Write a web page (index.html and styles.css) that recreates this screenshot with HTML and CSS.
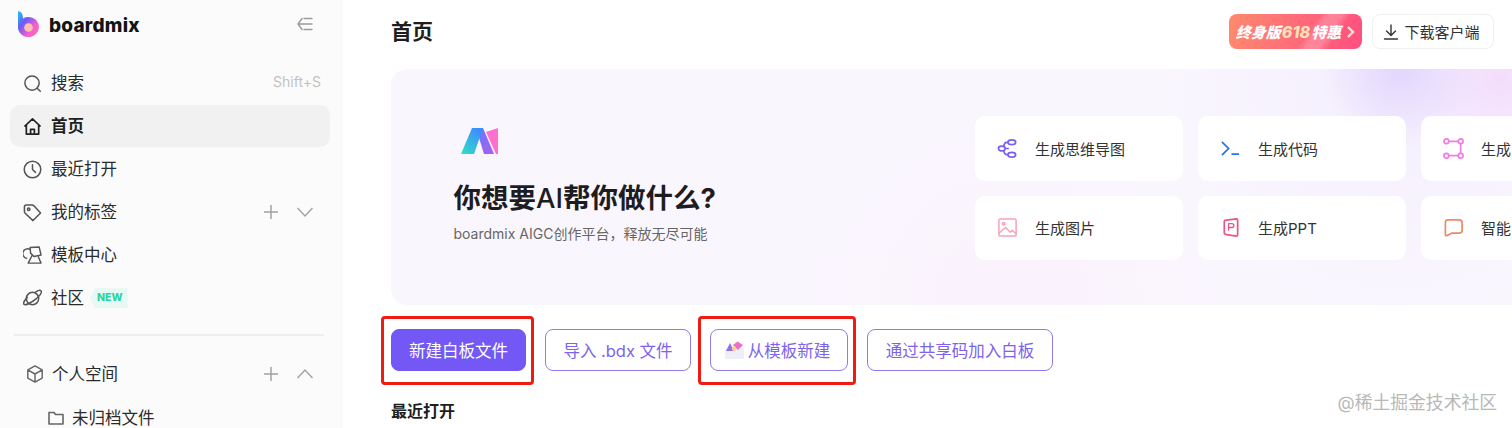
FILE: index.html
```html
<!DOCTYPE html>
<html lang="zh-CN">
<head>
<meta charset="utf-8">
<title>boardmix 首页</title>
<link rel="stylesheet" href="styles.css">
</head>
<body>
<div class="app">
  <aside class="sidebar">
    <div class="brand">
      <svg class="brand-logo" width="21" height="27" viewBox="0 0 21 27">
        <defs>
          <linearGradient id="lgB" x1="0" y1="0" x2="1" y2="1">
            <stop offset="0" stop-color="#1fc8f2"/><stop offset=".35" stop-color="#6a5cf5"/><stop offset=".68" stop-color="#f45fd0"/><stop offset="1" stop-color="#ff6fa8"/>
          </linearGradient>
        </defs>
        <path fill="url(#lgB)" d="M0 0 Q5 1 5 7 V7.500 A10.500 10 0 1 1 0 17 Z"/>
        <circle cx="10.500" cy="16.500" r="4.300" fill="#ffc0b0"/>
      </svg>
      <span class="brand-name">boardmix</span>
      <svg class="collapse" width="16" height="14" viewBox="0 0 16 14" fill="none" stroke="#9b9b9b" stroke-width="1.400" stroke-linecap="round" stroke-linejoin="round"><path d="M5 1.500 1 7l4 5.500M1 7h14M7 1.500h8M7 12.500h8"/></svg>
    </div>
    <nav class="nav">
      <a class="nav-item">
        <svg class="ic" viewBox="0 0 20 20" fill="none" stroke="#555" stroke-width="1.600" stroke-linecap="round"><circle cx="9.500" cy="9.500" r="7.500"/><path d="m15.200 15.200 3 3"/></svg>
        <span class="nav-label">搜索</span><span class="hint">Shift+S</span>
      </a>
      <a class="nav-item active">
        <svg class="ic" viewBox="0 0 20 20" fill="none" stroke="#222" stroke-width="1.800" stroke-linejoin="round"><path d="M1.500 10 10 2l8.500 8M3.500 8.500V18h13V8.500M8 18v-5h4v5"/></svg>
        <span class="nav-label">首页</span>
      </a>
      <a class="nav-item">
        <svg class="ic" viewBox="0 0 20 20" fill="none" stroke="#555" stroke-width="1.600" stroke-linecap="round" stroke-linejoin="round"><circle cx="10" cy="10" r="8.700"/><path d="M10 5v5l3.200 3"/></svg>
        <span class="nav-label">最近打开</span>
      </a>
      <a class="nav-item">
        <svg class="ic" viewBox="0 0 20 20" fill="none" stroke="#555" stroke-width="1.600" stroke-linejoin="round"><path d="M1.500 4q0-2 2-2H9.500q1 0 2 1l7 7.500-8 8-8.500-8q-.500-.500-.500-1.500Z"/><circle cx="6" cy="6.500" r="1.300"/></svg>
        <span class="nav-label">我的标签</span>
        <span class="tools">
          <svg width="16" height="16" viewBox="0 0 16 16" fill="none" stroke="#a3a3a3" stroke-width="1.500"><path d="M8 1v14M1 8h14"/></svg>
          <svg width="16" height="16" viewBox="0 0 16 16" fill="none" stroke="#a3a3a3" stroke-width="1.500"><path d="m.5 4 7.500 8 7.500-8"/></svg>
        </span>
      </a>
      <a class="nav-item">
        <svg class="ic" viewBox="0 0 20 20" fill="none" stroke="#555" stroke-width="1.500" stroke-linejoin="round"><path d="M7.500 3.800A5 5 0 1 0 4.500 13M7.500 1.500l9.500-.500 2 8.500-7.500 1.500-3.500-3.500ZM9.500 10l-4 8h13.500l-3-7"/></svg>
        <span class="nav-label">模板中心</span>
      </a>
      <a class="nav-item">
        <svg class="ic" viewBox="0 0 20 20" fill="none" stroke="#555" stroke-width="1.600" stroke-linecap="round"><circle cx="10" cy="10" r="6.500"/><path d="M4.500 9C1.500 12 0 15 1 16c1.500 1.500 7-1 12-5s7-7.500 6-9c-.7-1-3-.5-5.500 1"/></svg>
        <span class="nav-label">社区</span><span class="badge">NEW</span>
      </a>
    </nav>
    <hr class="divider">
    <div class="space-head">
      <svg class="ic-space" viewBox="0 0 20 20" fill="none" stroke="#666" stroke-width="1.600" stroke-linejoin="round"><path d="M10 1 18 5.500v9L10 19l-8-4.500v-9ZM2 5.500l8 4.500 8-4.500M10 10v9"/></svg>
      <span class="nav-label">个人空间</span>
      <span class="tools">
        <svg width="16" height="16" viewBox="0 0 16 16" fill="none" stroke="#a3a3a3" stroke-width="1.500"><path d="M8 1v14M1 8h14"/></svg>
        <svg width="16" height="16" viewBox="0 0 16 16" fill="none" stroke="#a3a3a3" stroke-width="1.500"><path d="m.5 12 7.500-8 7.500 8"/></svg>
      </span>
    </div>
    <div class="folder">
      <svg width="16" height="14" viewBox="0 0 16 14" fill="none" stroke="#666" stroke-width="1.600" stroke-linejoin="round"><path d="M1 1.500h5l1.500 2H15V13H1Z"/></svg>
      <span class="nav-label">未归档文件</span>
    </div>
  </aside>

  <main class="main">
    <header class="topbar">
      <h1 class="title">首页</h1>
      <div class="top-actions">
        <a class="promo">终身版<em>618</em>特惠<svg width="9" height="12" viewBox="0 0 9 12" fill="none" stroke="#ffe3d0" stroke-width="2.400"><path d="m2 1 5 5-5 5"/></svg></a>
        <a class="download">
          <svg width="16" height="16" viewBox="0 0 16 16" fill="none" stroke="#333" stroke-width="1.400" stroke-linecap="round" stroke-linejoin="round"><path d="M8 1v10M3.500 7 8 11.500 12.500 7M1.500 15h13"/></svg>
          下载客户端
        </a>
      </div>
    </header>

    <section class="hero">
      <div class="hero-text">
        <svg class="ai-logo" width="37" height="28" viewBox="0 0 37 28">
          <defs>
            <linearGradient id="lgA" x1="0" y1="1" x2=".7" y2="0"><stop offset="0" stop-color="#2fe0c4"/><stop offset="1" stop-color="#3d8dff"/></linearGradient>
            <linearGradient id="lgM" x1="0" y1="0" x2="1" y2="1"><stop offset="0" stop-color="#5f7bff"/><stop offset="1" stop-color="#b05cf0"/></linearGradient>
          </defs>
          <path fill="#ff6fd0" d="M25 5 37 1v26h-2Z"/>
          <path fill="url(#lgM)" d="M15 1h7l11 26H23Z"/>
          <path fill="url(#lgA)" d="M11 1h11L13 27H0Z"/>
        </svg>
        <h2 class="hero-title">你想要<span class="hero-ai">AI</span>帮你做什么?</h2>
        <p class="hero-sub">boardmix AIGC创作平台，释放无尽可能</p>
      </div>
      <div class="hero-cards">
        <a class="card">
          <svg class="card-ic" viewBox="0 0 22 22" fill="none" stroke="#7b5ff0" stroke-width="1.800"><ellipse cx="15.500" cy="4.500" rx="4" ry="2.500"/><ellipse cx="15.500" cy="17.500" rx="4" ry="2.500"/><ellipse cx="5" cy="11" rx="3.500" ry="2.500"/><path d="M11.500 4.500H10Q8 4.500 7 8.500M11.500 17.500H10Q8 17.500 7 13.500M8.500 11h4"/></svg>
          生成思维导图
        </a>
        <a class="card">
          <svg class="card-ic" viewBox="0 0 22 22" fill="none" stroke="#2a6ff0" stroke-width="1.800"><path d="m2 4 7 7-7 7M12 17h8"/></svg>
          生成代码
        </a>
        <a class="card">
          <svg class="card-ic" viewBox="0 0 22 22" fill="none" stroke="#f47be6" stroke-width="1.800"><circle cx="3.500" cy="3.500" r="2.500"/><circle cx="18.500" cy="3.500" r="2.500"/><circle cx="3.500" cy="18.500" r="2.500"/><circle cx="18.500" cy="18.500" r="2.500"/><path d="M6 3.500h10M6 18.500h10M18.500 6v10"/></svg>
          生成
        </a>
        <a class="card">
          <svg class="card-ic" viewBox="0 0 22 22" fill="none" stroke="#f8a3b8" stroke-width="1.600" stroke-linejoin="round"><rect x="2" y="2" width="18" height="18" rx="1.500"/><circle cx="7" cy="7" r="1.300"/><path d="m2 17 7-6 5 5 2-2 4 3.500"/></svg>
          生成图片
        </a>
        <a class="card">
          <svg class="card-ic" viewBox="0 0 22 22" fill="none" stroke="#e8558a" stroke-width="1.800" stroke-linejoin="round"><path d="M5 3.500 17 2q1.500 0 1.500 1.500v15q0 1.500-1.500 1.500L7 18.500q-2.500-.5-2.500-2V5Z"/><path d="M9 14.500V7h3.500q2 0 2 2t-2 2H9" stroke-width="1.400"/></svg>
          生成PPT
        </a>
        <a class="card">
          <svg class="card-ic" viewBox="0 0 22 22" fill="none" stroke="#ee8a63" stroke-width="1.800" stroke-linejoin="round"><path d="M5 3h12q3 0 3 3v8q0 3-3 3H9l-5 2.500q-1.500.5-1.500-1V6q0-3 2.500-3Z"/></svg>
          智能
        </a>
      </div>
    </section>

    <div class="actions">
      <a class="btn btn-primary">新建白板文件</a>
      <a class="btn btn-import">导入 .bdx 文件</a>
      <a class="btn btn-template">
        <svg width="21" height="20" viewBox="0 0 21 20"><rect x="1" y="8" width="19" height="11" rx="1.500" fill="#efedf5"/><path d="M2 11 6 3l4 8Z" fill="#8d74ee"/><path d="m9 5 4.500-3.500L19 5l-5 5Z" fill="#ee6fc4"/><circle cx="10" cy="8.500" r="2.200" fill="#ffd27a"/></svg>
        从模板新建
      </a>
      <a class="btn btn-code">通过共享码加入白板</a>
      <span class="mark mark-a"></span>
      <span class="mark mark-b"></span>
    </div>

    <h3 class="recent">最近打开</h3>
  </main>
  <span class="watermark">@稀土掘金技术社区</span>
</div>
</body>
</html>
```

FILE: styles.css
```css
* { box-sizing: border-box; }
html, body { margin: 0; height: 100%; overflow: hidden; background: #fff; }
body { font-family: Inter, "Noto Sans CJK SC", sans-serif; color: #2b2b2b; }
a { color: inherit; text-decoration: none; }
.app { display: flex; width: 1512px; height: 428px; overflow: hidden; position: relative; }

.sidebar { width: 343px; flex: none; background: #fbfbfb; padding: 0 13px 0 10px; }
.brand { display: flex; align-items: center; height: 62px; padding: 0 8px 14px 8px; }
.brand-logo { flex: none; }
.brand-name { font-size: 19px; font-weight: 800; color: #141414; margin-left: 10px; letter-spacing: .2px; flex: 1; line-height: 1; margin-top: 2px; }
.collapse { margin-right: 9px; }

.nav { display: flex; flex-direction: column; gap: 1px; }
.nav-item { display: flex; align-items: center; height: 42px; padding: 0 10px 0 13px; border-radius: 10px; font-size: 16.500px; }
.nav-item.active { background: #f1f1f1; font-weight: 700; color: #1f1f1f; }
.ic { width: 19px; height: 19px; flex: none; margin-right: 9px; }
.nav-label { line-height: 1; white-space: nowrap; }
.hint { margin-left: auto; margin-right: -1px; margin-bottom: 3px; font-size: 14px; color: #c2c2c2; }
.tools { margin-left: auto; display: flex; align-items: center; gap: 18px; padding-right: 7px; }
.badge { margin-left: 6px; background: #e8f8f4; color: #2fd3a0; font-size: 10.500px; font-weight: 800; padding: 3px 5px 3px 7px; line-height: 14px; clip-path: polygon(5px 0, 100% 0, 100% 100%, 5px 100%, 0 50%); }

.divider { border: 0; height: 2px; background: #eeeeee; margin: 15px 6px 0 4px; }
.space-head { display: flex; align-items: center; height: 42px; margin-top: 17px; padding: 0 10px 0 16px; font-size: 16.500px; }
.ic-space { width: 18px; height: 18px; margin-right: 8px; flex: none; }
.folder { display: flex; align-items: center; gap: 8px; height: 42px; margin-top: 2px; padding-left: 38px; font-size: 16.500px; }

.main { flex: 1; min-width: 0; padding: 14px 18px 0 48px; }
.topbar { display: flex; align-items: center; justify-content: space-between; height: 35px; }
.title { margin: 0; font-size: 21px; font-weight: 700; color: #1e1e1e; line-height: 35px; }
.top-actions { display: flex; gap: 10px; }
.promo { display: flex; align-items: center; justify-content: center; gap: 1px; width: 133px; height: 35px; border-radius: 8px; color: #fff; font-size: 15px; font-weight: 800; font-style: italic; white-space: nowrap; background:
  linear-gradient(125deg, rgba(255,255,255,0) 58%, rgba(255,255,255,.22) 64%, rgba(255,255,255,.22) 72%, rgba(255,255,255,0) 78%),
  linear-gradient(100deg, #ff8a6c 0%, #ff6f78 45%, #ff4f80 100%); }
.promo em { color: #ffe1b8; font-size: 16px; }
.promo svg { margin-left: 4px; }
.download { display: flex; align-items: center; justify-content: center; gap: 5px; width: 122px; height: 35px; padding-right: 3px; border: 1px solid #efefef; border-radius: 8px; font-size: 15px; color: #333; background: #fff; }

.hero { display: flex; margin: 20px -18px 0 0; height: 236px; border-radius: 16px 0 0 16px; overflow: hidden; background:
  radial-gradient(circle at 1010px 0, #e2d6fd 0, rgba(226,214,253,0) 80px),
  radial-gradient(circle at 1110px 10px, #f3dcfb 0, rgba(243,220,251,0) 90px),
  radial-gradient(circle at 620px 236px, rgba(250,236,250,.4) 0, rgba(250,236,250,0) 200px),
  radial-gradient(circle at 90% 0, rgba(232,224,255,.35) 0, rgba(232,224,255,0) 240px),
  #faf6fe; }
.hero-text { width: 584px; flex: none; padding: 58px 0 0 62.500px; }
.ai-logo { display: block; margin-left: 7px; }
.hero-title { margin: 25px 0 0; font-size: 27.500px; font-weight: 700; line-height: 36px; color: #1d1d1f; white-space: nowrap; }
.hero-ai { font-weight: 500; }
.hero-sub { margin: 9px 0 0; font-size: 14px; line-height: 18px; color: #666; white-space: nowrap; }
.hero-cards { display: grid; grid-template-columns: repeat(3, 208px); grid-auto-rows: 64.500px; gap: 15px; padding-top: 47px; }
.card { display: flex; align-items: center; gap: 17px; padding-left: 22px; background: #fff; border-radius: 10px; font-size: 15px; color: #333; white-space: nowrap; }
.card-ic { width: 21px; height: 21px; flex: none; }

.actions { display: flex; gap: 19px; margin-top: 24px; position: relative; }
.btn { display: flex; align-items: center; justify-content: center; gap: 3px; height: 42px; border: 1px solid #8f7bee; border-radius: 8px; font-size: 16.500px; color: #7d63ec; white-space: nowrap; }
.btn-primary { width: 135px; background: #7358f5; border-color: #7358f5; color: #fff; }
.btn-import { width: 146px; }
.btn-template { width: 138px; padding-right: 4px; }
.btn-code { width: 186px; }
.mark { position: absolute; top: -13px; height: 69px; border: 3px solid #ee1c12; border-radius: 4px; pointer-events: none; }
.mark-a { left: -10px; width: 153px; }
.mark-b { left: 307px; width: 158px; }

.recent { margin: 29px 0 0; font-size: 16px; font-weight: 700; color: #1e1e1e; line-height: 22px; }
.watermark { position: absolute; right: 15px; top: 392px; font-size: 17.800px; line-height: 22px; color: #b8b8b8; white-space: nowrap; }
```
